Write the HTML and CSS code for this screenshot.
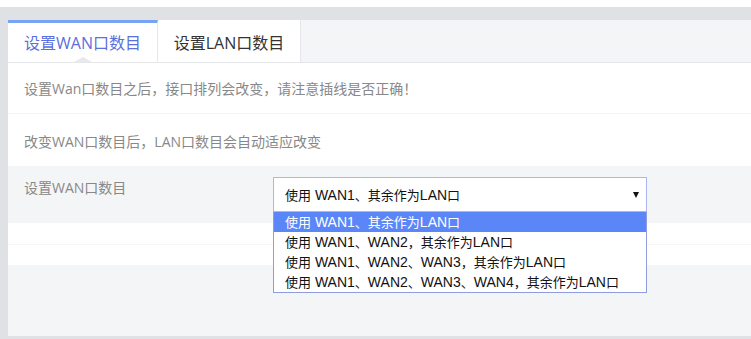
FILE: index.html
```html
<!DOCTYPE html>
<html lang="zh-CN">
<head>
<meta charset="utf-8">
<title>设置WAN口数目</title>
<link rel="stylesheet" href="styles.css">
</head>
<body>
<div class="page">
  <div class="panel">
    <div class="tabs">
      <div class="tab active">设置WAN口数目<span class="caret"></span></div>
      <div class="tab">设置LAN口数目</div>
    </div>
    <div class="row note">设置Wan口数目之后，接口排列会改变，请注意插线是否正确！</div>
    <div class="row note second">改变WAN口数目后，LAN口数目会自动适应改变</div>
    <div class="row form">
      <div class="label">设置WAN口数目</div>
      <div class="select-wrap">
        <div class="select">
          <span>使用<span class="en"> WAN1</span>、其余作为<span class="en">LAN</span>口</span>
          <span class="arrow"></span>
        </div>
        <ul class="options">
          <li class="selected">使用<span class="en"> WAN1</span>、其余作为<span class="en">LAN</span>口</li>
          <li>使用<span class="en"> WAN1</span>、<span class="en">WAN2</span>，其余作为<span class="en">LAN</span>口</li>
          <li>使用<span class="en"> WAN1</span>、<span class="en">WAN2</span>、<span class="en">WAN3</span>，其余作为<span class="en">LAN</span>口</li>
          <li>使用<span class="en"> WAN1</span>、<span class="en">WAN2</span>、<span class="en">WAN3</span>、<span class="en">WAN4</span>，其余作为<span class="en">LAN</span>口</li>
        </ul>
      </div>
    </div>
    <div class="blank first"></div>
    <div class="blank"></div>
    <div class="filler"></div>
  </div>
</div>
</body>
</html>
```
FILE: styles.css
```css
html, body {
  margin: 0;
  padding: 0;
  background: #ffffff;
  font-family: "Open Sans", "Noto Sans CJK SC", sans-serif;
}
.page {
  margin-top: 7px;
  background: #dfe1e5;
  padding: 13px 0 3px 8px;
}
.panel {
  background: #f4f5f7;
  height: 316px;
  display: flex;
  flex-direction: column;
}
.tabs {
  display: flex;
  height: 42px;
  background: #f4f5f7;
  border-bottom: 1px solid #e4e6ea;
}
.tab {
  position: relative;
  box-sizing: border-box;
  height: 42px;
  background: #ffffff;
  font-size: 16px;
  color: #333333;
  display: flex;
  align-items: center;
  justify-content: center;
  border-right: 1px solid #e6e7ea;
}
.tab.active {
  width: 150px;
  color: #5b6fdd;
  border-top: 3px solid #77a3f4;
  padding-bottom: 1px;
}
.tab:not(.active) {
  width: 143px;
  padding-top: 1px;
}
.caret {
  position: absolute;
  left: 66px;
  bottom: 0;
  width: 0;
  height: 0;
  border-left: 9px solid transparent;
  border-right: 9px solid transparent;
  border-bottom: 5px solid #e8e9ee;
}
.row {
  box-sizing: border-box;
  padding-left: 16px;
  font-size: 14px;
  color: #888888;
}
.note {
  background: #ffffff;
  height: 51px;
  display: flex;
  align-items: center;
  border-bottom: 1px solid #f6f6f7;
}
.note.second {
  height: 52px;
  border-bottom: none;
  padding-top: 2px;
}
.form {
  height: 57px;
  display: flex;
  padding-top: 11px;
}
.label {
  width: 249px;
  line-height: 22px;
}
.select-wrap {
  position: relative;
  width: 374px;
  font-family: "Noto Sans CJK SC", sans-serif;
}
.en {
  font-family: "Liberation Sans", Arial, sans-serif;
  font-size: 14px;
}
.select {
  box-sizing: border-box;
  height: 35px;
  border: 1px solid #a9b6f3;
  background: #ffffff;
  color: #111111;
  font-size: 13px;
  display: flex;
  align-items: center;
  justify-content: space-between;
  padding: 0 7px 0 11px;
}
.arrow {
  width: 0;
  height: 0;
  border-left: 3px solid transparent;
  border-right: 3px solid transparent;
  border-top: 6px solid #111111;
}
.options {
  position: absolute;
  top: 35px;
  left: 0;
  box-sizing: border-box;
  width: 374px;
  margin: 0;
  padding: 0;
  list-style: none;
  background: #ffffff;
  border: 1px solid #8f9de0;
  border-top: none;
  z-index: 2;
}
.options li {
  height: 20px;
  line-height: 20px;
  padding-left: 11px;
  font-size: 13px;
  color: #111111;
}
.options li.selected {
  background: #5b86f8;
  color: #ffffff;
}
.blank {
  background: #ffffff;
  height: 20px;
  border-bottom: 1px solid #f6f6f7;
}
.blank.first {
  height: 21px;
}
.filler {
  flex: 1;
  background: #f4f5f7;
}
```
